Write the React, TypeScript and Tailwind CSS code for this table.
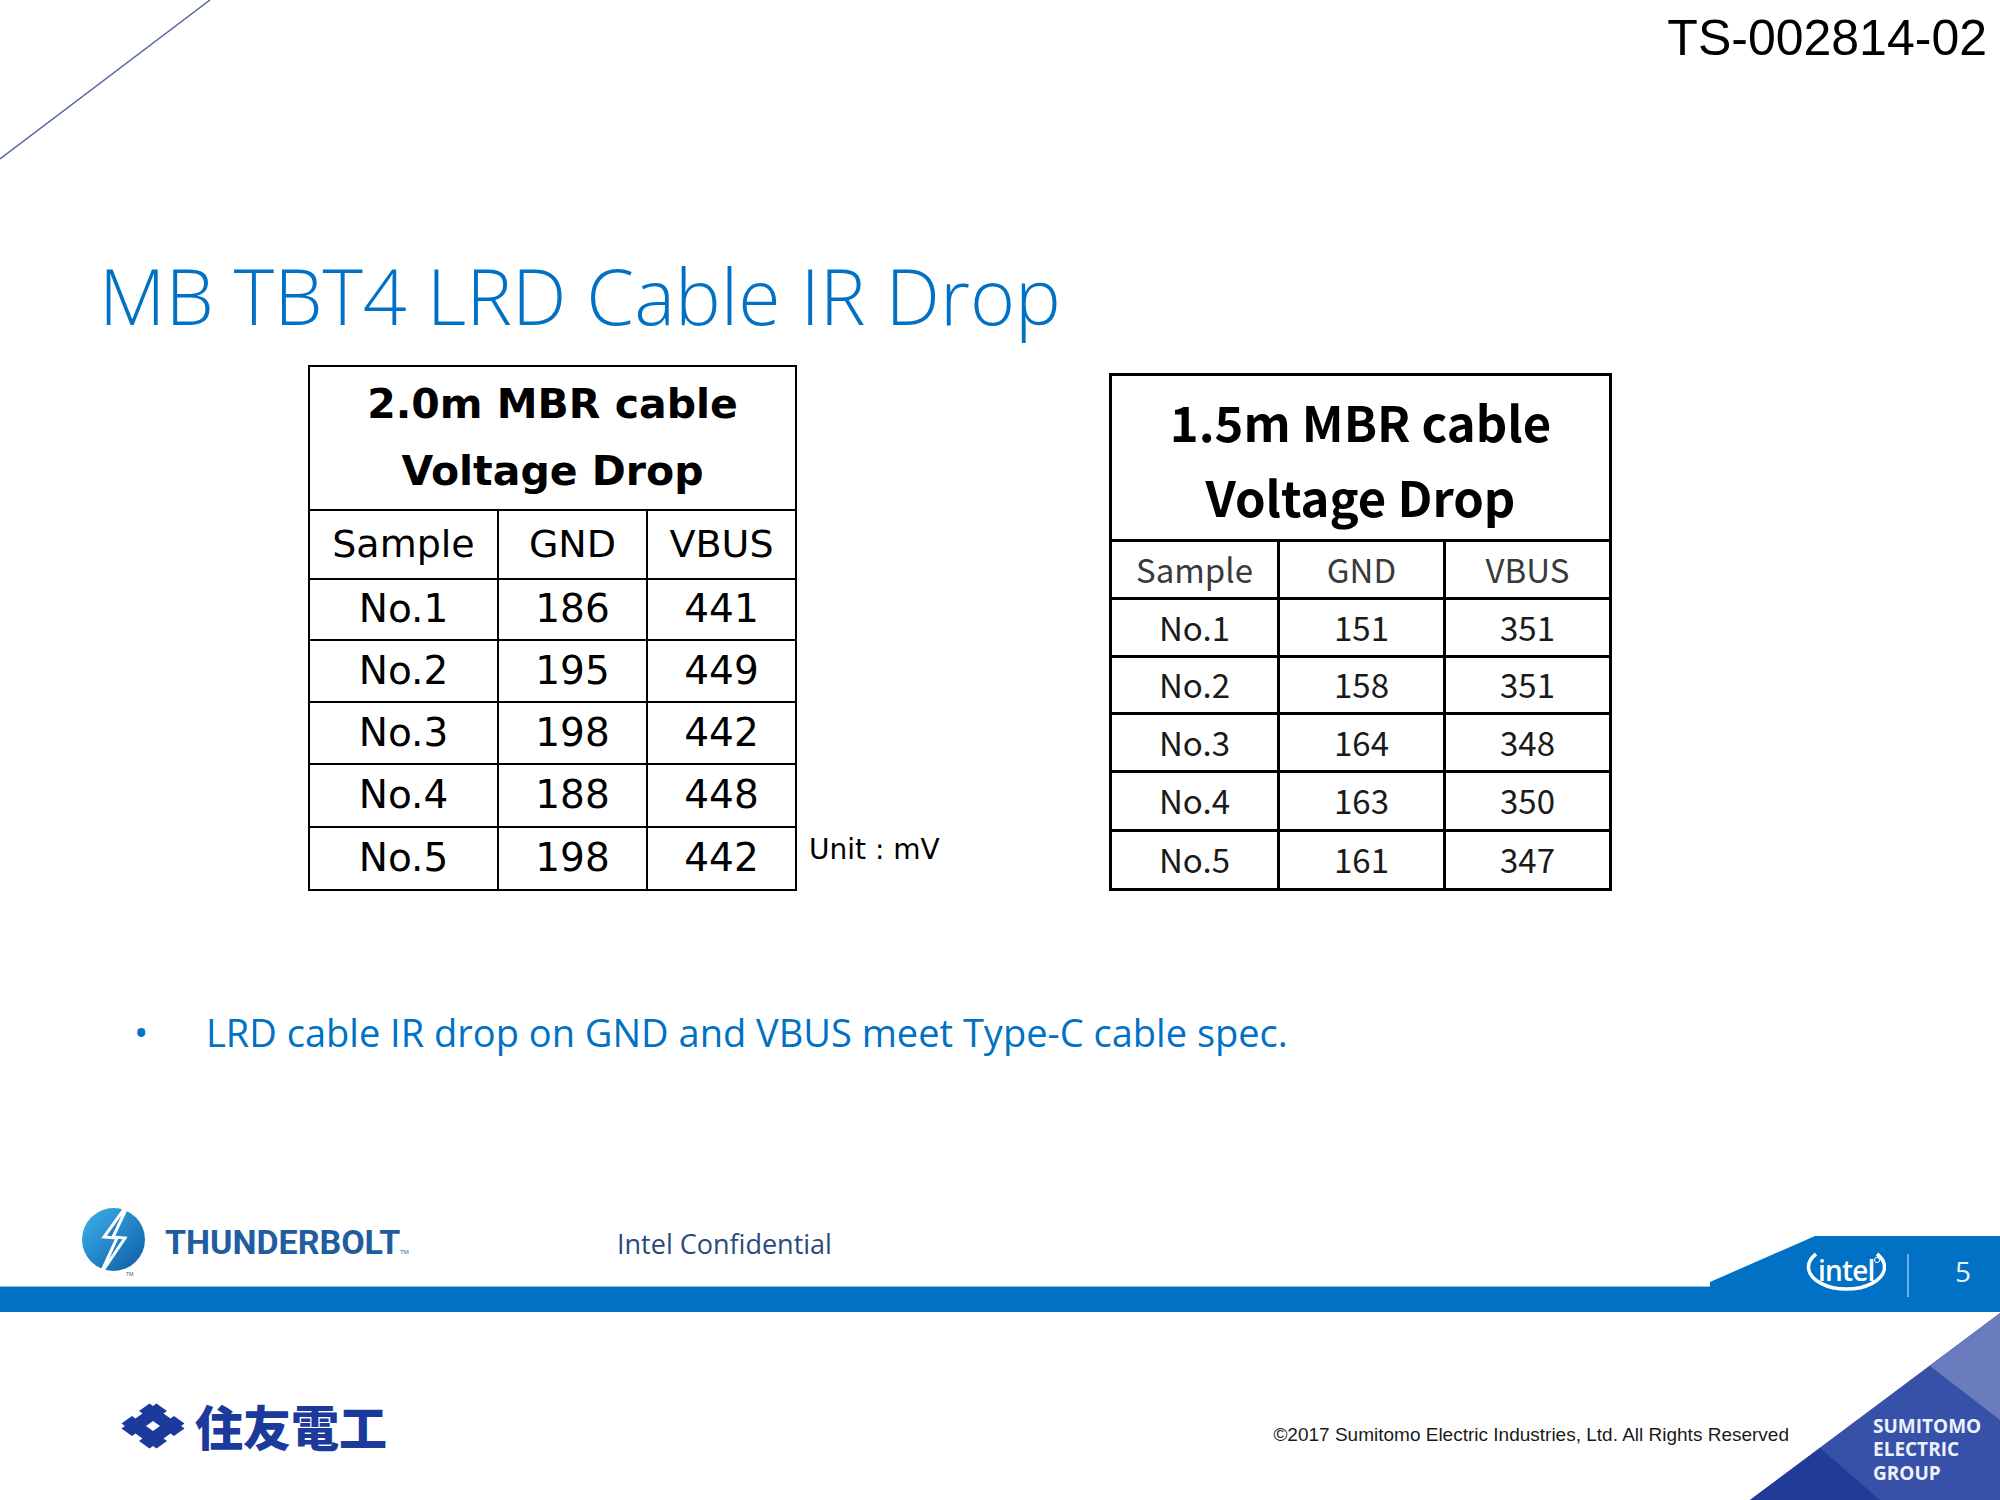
import React from 'react'

const table1 = {
    title: ['2.0m MBR cable', 'Voltage Drop'],
    rows: [
        ['No.1', '186', '441'],
        ['No.2', '195', '449'],
        ['No.3', '198', '442'],
        ['No.4', '188', '448'],
        ['No.5', '198', '442'],
    ],
}

const table2 = {
    title: ['1.5m MBR cable', 'Voltage Drop'],
    rows: [
        ['No.1', '151', '351'],
        ['No.2', '158', '351'],
        ['No.3', '164', '348'],
        ['No.4', '163', '350'],
        ['No.5', '161', '347'],
    ],
}

const heads = ['Sample', 'GND', 'VBUS']
const rowH1 = ['h-[61px]', 'h-[62px]', 'h-[62px]', 'h-[63px]', 'h-[63px]']
const rowH2 = ['h-[58px]', 'h-[57px]', 'h-[58px]', 'h-[59px]', 'h-[59px]']

const ThunderboltLogo = () => (
    <svg width="70" height="80" viewBox="0 0 70 80">
        <defs>
            <linearGradient id="tbg" x1="0" y1="0" x2="1" y2="1">
                <stop offset="0" stopColor="#3eb3ee" />
                <stop offset="1" stopColor="#0b5aa3" />
            </linearGradient>
        </defs>
        <circle cx="33.5" cy="40.5" r="31.5" fill="url(#tbg)" />
        <path
            d="M50 2 L24 38 L37 39 L20 76 L45 39 L33 38 Z"
            fill="#1b82cc"
            stroke="#ffffff"
            strokeWidth="3"
            strokeLinejoin="miter"
        />
        <text x="46" y="77" fontSize="5" fill="#1f5d9e" fontFamily="Roboto, sans-serif">TM</text>
    </svg>
)

const IntelLogo = () => (
    <svg width="82" height="50" viewBox="0 0 82 50">
        <path d="M12 5 A 38 22 0 1 0 73 5" fill="none" stroke="#ffffff" strokeWidth="3.5" />
        <text
            x="14"
            y="32"
            fill="#ffffff"
            fontFamily="'Open Sans', sans-serif"
            fontSize="28"
            fontWeight="600"
            letterSpacing="-0.8"
        >
            intel
        </text>
        <circle cx="73" cy="11" r="2.6" stroke="#ffffff" fill="none" strokeWidth="1" />
    </svg>
)

const SumitomoMark = () => (
    <svg width="70" height="50" viewBox="-7.07 -7.07 14.14 14.14" preserveAspectRatio="none">
        <g transform="rotate(45) translate(-5 -5)">
            <path
                fillRule="evenodd"
                fill="#1b3a9b"
                d="M1 0 L4 0 L4 1 L6 1 L6 0 L9 0 L9 1 L10 1 L10 4 L9 4 L9 6 L10 6 L10 9 L9 9 L9 10 L6 10 L6 9 L4 9 L4 10 L1 10 L1 9 L0 9 L0 6 L1 6 L1 4 L0 4 L0 1 L1 1 Z M4 4 L6 4 L6 6 L4 6 Z"
            />
        </g>
    </svg>
)

const App = () => {
    return (
        <div className="relative w-[2000px] h-[1500px] overflow-hidden bg-white font-['Open_Sans',sans-serif]">
            {/* corner line */}
            <svg className="absolute left-0 top-0" width="212" height="162">
                <line x1="0" y1="159" x2="210" y2="0" stroke="#5566a3" strokeWidth="1.5" />
            </svg>

            {/* doc number */}
            <div className="flex justify-end pt-[13px] pr-[13px]">
                <span className="text-[50px] leading-[50px] text-black font-['Liberation_Sans',Arial,sans-serif]">
                    TS-002814-02
                </span>
            </div>

            <h1 className="mt-[194px] ml-[99px] text-[77px] leading-[77px] font-light text-[#0071c5]">
                MB TBT4 LRD Cable IR Drop
            </h1>

            {/* tables */}
            <div className="flex items-start mt-[31px] pl-[308px]">
                <table className="border-collapse text-black font-['DejaVu_Sans',Verdana,sans-serif]">
                    <tbody>
                        <tr>
                            <td colSpan={3} className="h-[144px] border-2 border-black text-center align-middle text-[41px] leading-[67px] font-bold">
                                {table1.title[0]}
                                <br />
                                {table1.title[1]}
                            </td>
                        </tr>
                        <tr>
                            {heads.map((h, i) => (
                                <td
                                    key={h}
                                    className={
                                        'h-[69px] border-2 border-black text-center align-middle text-[38px] ' +
                                        (i === 0 ? 'w-[189px]' : 'w-[149px]')
                                    }
                                >
                                    {h}
                                </td>
                            ))}
                        </tr>
                        {table1.rows.map((row, r) => (
                            <tr key={row[0]}>
                                {row.map((c, i) => (
                                    <td key={i} className={rowH1[r] + ' border-2 border-black text-center align-middle text-[39px]'}>
                                        {c}
                                    </td>
                                ))}
                            </tr>
                        ))}
                    </tbody>
                </table>

                <div className="self-end w-[300px] ml-[12px] mb-[27px] text-[28px] leading-[28px] text-black font-['DejaVu_Sans',Verdana,sans-serif]">
                    Unit : mV
                </div>

                <table className="mt-[8px] border-collapse text-[#1a1a1a] font-['Noto_Sans_CJK_JP',sans-serif]">
                    <tbody>
                        <tr>
                            <td colSpan={3} className="h-[166px] border-[3px] border-black text-center align-middle text-[49px] leading-[75px] font-bold text-black">
                                {table2.title[0]}
                                <br />
                                {table2.title[1]}
                            </td>
                        </tr>
                        <tr>
                            {heads.map((h, i) => (
                                <td
                                    key={h}
                                    className={
                                        'h-[58px] border-[3px] border-black text-center align-middle text-[33px] text-[#3a3a3a] ' +
                                        (i === 0 ? 'w-[168px]' : 'w-[166px]')
                                    }
                                >
                                    {h}
                                </td>
                            ))}
                        </tr>
                        {table2.rows.map((row, r) => (
                            <tr key={row[0]}>
                                {row.map((c, i) => (
                                    <td key={i} className={rowH2[r] + ' border-[3px] border-black text-center align-middle text-[33px]'}>
                                        {c}
                                    </td>
                                ))}
                            </tr>
                        ))}
                    </tbody>
                </table>
            </div>

            {/* bullet */}
            <div className="flex items-start mt-[115px] pl-[134px] text-[38px] leading-[52px] text-[#0071c5]">
                <span className="w-[72px]">•</span>
                <span>LRD cable IR drop on GND and VBUS meet Type-C cable spec.</span>
            </div>

            {/* footer band */}
            <div className="relative mt-[138px]">
                <div className="flex items-start h-[90px] pl-[80px] pt-[3px]">
                    <div className="flex items-start w-[537px]">
                        <ThunderboltLogo />
                        <span className="ml-[15px] mt-[26px] text-[34px] leading-[34px] font-bold text-[#1f5d9e] font-['Roboto',sans-serif]">
                            THUNDERBOLT
                        </span>
                        <span className="mt-[50px] text-[6px] leading-[6px] text-[#1f5d9e]">TM</span>
                    </div>
                    <span className="mt-[31px] text-[27px] leading-[27px] text-[#2b4a7c]">Intel Confidential</span>
                </div>
                <div className="h-[26px] bg-[#0071c5] border-t border-[#8cc3ec]" />

                <div className="absolute right-0 bottom-0 w-[290px] h-[76px] bg-[#0071c5] [clip-path:polygon(105px_0,100%_0,100%_100%,0_100%,0_46px)]">
                    <div className="flex items-start pl-[94px] pt-[13px]">
                        <IntelLogo />
                        <div className="ml-[21px] mt-[5px] w-[2px] h-[43px] bg-[#6fb0e6]" />
                        <span className="ml-[46px] mt-[8px] text-[28px] leading-[28px] text-[#e8f2fb]">5</span>
                    </div>
                </div>
            </div>

            {/* bottom area */}
            <div className="flex items-start pt-[89px] pl-[118px]">
                <SumitomoMark />
                <span className="ml-[7px] text-[48px] leading-[48px] font-black text-[#1b3a9b] font-['Noto_Sans_CJK_JP',sans-serif]">
                    住友電工
                </span>
                <span className="ml-auto mr-[211px] mt-[24px] text-[19px] leading-[19px] text-[#1a1a1a] font-['Liberation_Sans',Arial,sans-serif]">
                    ©2017 Sumitomo Electric Industries, Ltd. All Rights Reserved
                </span>
            </div>

            {/* group corner */}
            <svg className="absolute right-0 bottom-0" width="250" height="187" viewBox="0 0 250 187">
                <polygon points="0,187 250,0 250,187" fill="#3751a9" />
                <polygon points="180,53 250,0 250,107" fill="#6a7cbd" />
                <polygon points="0,187 70,135 130,187" fill="#223a98" />
            </svg>
            <div className="absolute left-[1873px] top-[1415px] text-[19px] leading-[23.3px] font-bold text-[#eef1fb]">
                SUMITOMO
                <br />
                ELECTRIC
                <br />
                GROUP
            </div>
        </div>
    )
}

export default App
